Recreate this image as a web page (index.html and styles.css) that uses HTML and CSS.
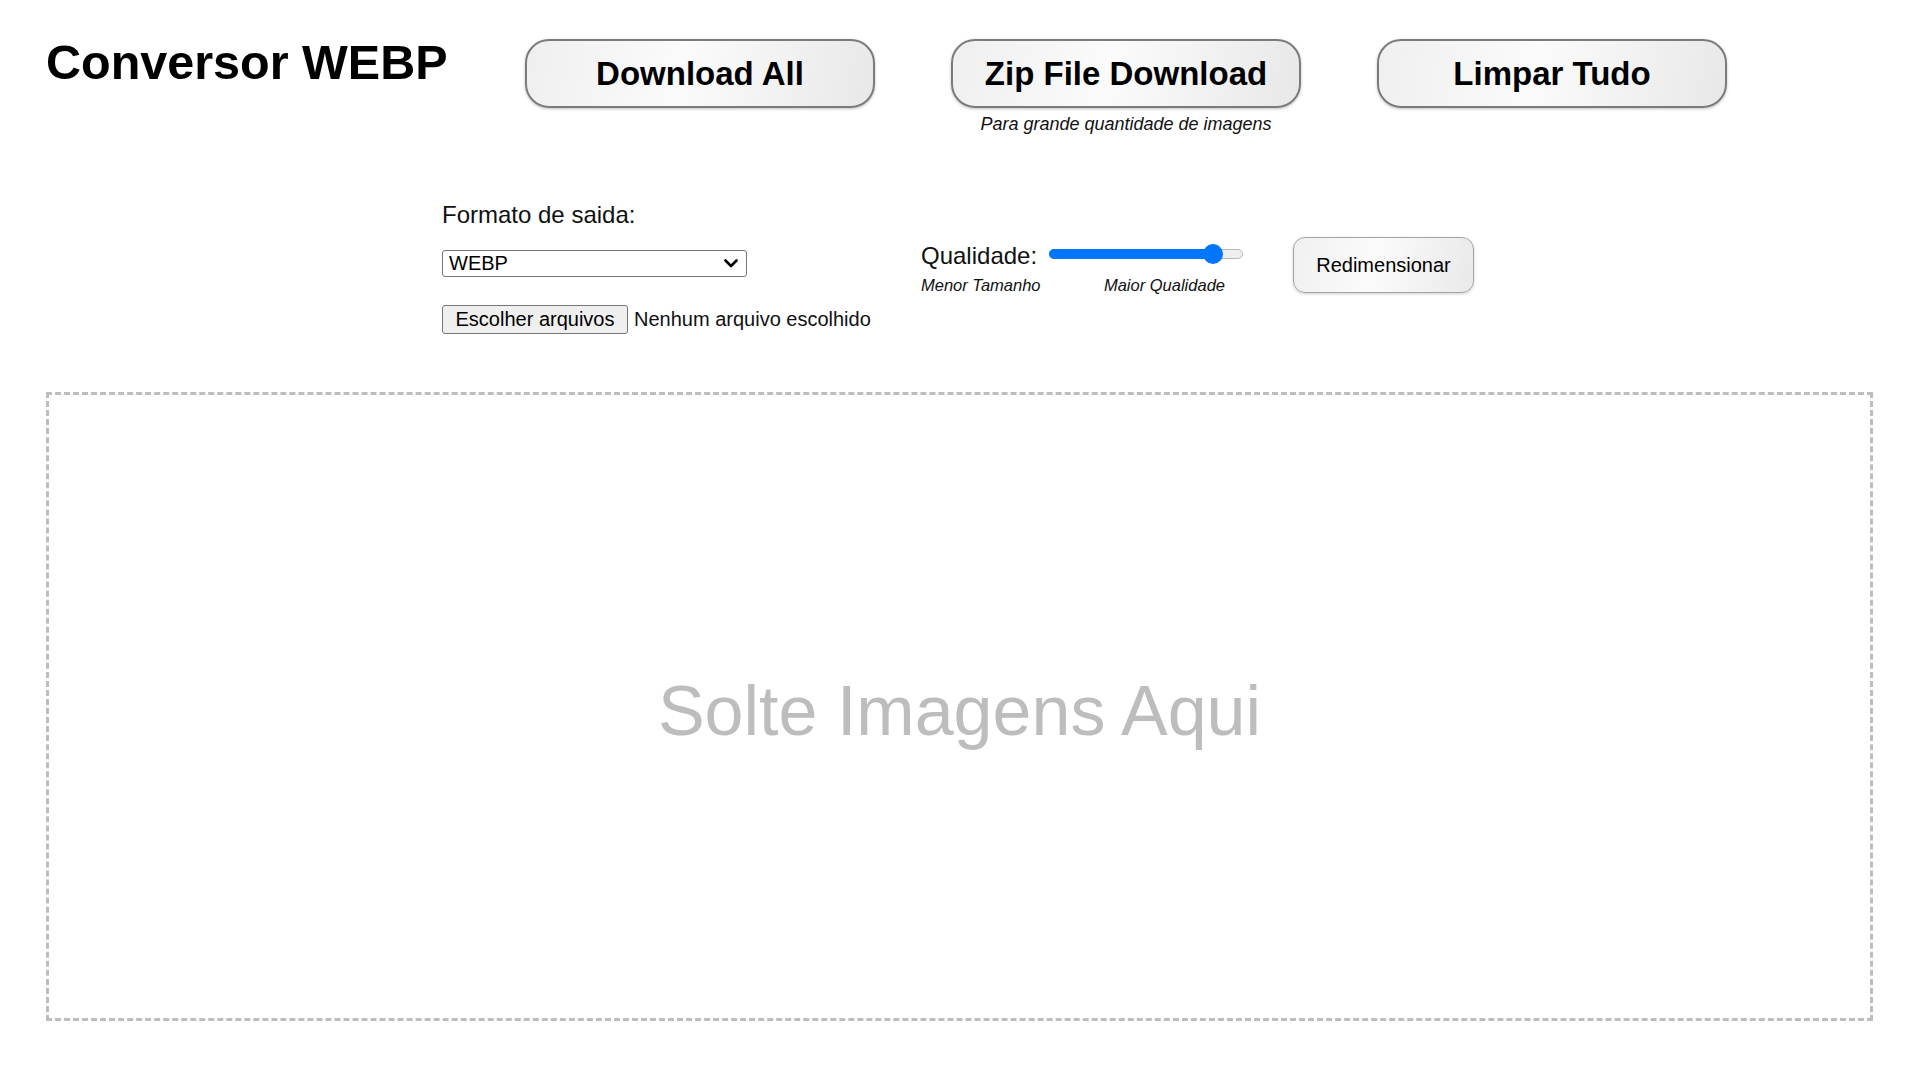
FILE: index.html
```html
<!DOCTYPE html>
<html lang="pt-BR">
<head>
<meta charset="utf-8">
<title>Conversor WEBP</title>
<link rel="stylesheet" href="styles.css">
</head>
<body>
<div class="page">
  <header class="header">
    <h1 class="title">Conversor WEBP</h1>
    <div class="actions">
      <button class="pill">Download All</button>
      <div class="zip-col">
        <button class="pill">Zip File Download</button>
        <div class="hint">Para grande quantidade de imagens</div>
      </div>
      <button class="pill">Limpar Tudo</button>
    </div>
  </header>

  <section class="controls">
    <div class="col-format">
      <label class="label">Formato de saida:</label>
      <div class="select-wrap">
        <select class="select"><option>WEBP</option><option>PNG</option><option>JPEG</option></select>
        <svg class="chevron" viewBox="0 0 14 9" width="14" height="9"><path d="M1.5 1.5 L7 7 L12.5 1.5" fill="none" stroke="#000" stroke-width="2.6" stroke-linecap="round" stroke-linejoin="round"/></svg>
      </div>
      <div class="file-row">
        <button class="file-btn">Escolher arquivos</button>
        <span class="file-name">Nenhum arquivo escolhido</span>
      </div>
    </div>

    <div class="col-quality">
      <div class="quality-row">
        <span class="label">Qualidade:</span>
        <div class="slider">
          <div class="slider-track"></div>
          <div class="slider-fill" style="width: 164px"></div>
          <div class="slider-thumb" style="left: 154px"></div>
        </div>
      </div>
      <div class="quality-hints">
        <span>Menor Tamanho</span>
        <span>Maior Qualidade</span>
      </div>
    </div>

    <button class="resize-btn">Redimensionar</button>
  </section>

  <section class="dropzone">
    <span class="drop-text">Solte Imagens Aqui</span>
  </section>
</div>
</body>
</html>
```

FILE: styles.css
```css
* { box-sizing: border-box; }

html, body {
  margin: 0;
  padding: 0;
  background: #ffffff;
}

body {
  font-family: "Liberation Sans", Arial, sans-serif;
  color: #000;
}

.page {
  padding: 0 47px 0 46px;
}

.header {
  display: flex;
  align-items: flex-start;
  gap: 76px;
  padding-top: 35px;
}

.title {
  flex: none;
  width: 403px;
  margin: 0;
  font-size: 48.5px;
  line-height: 55px;
  font-weight: bold;
  white-space: nowrap;
}

.actions {
  display: flex;
  align-items: flex-start;
  gap: 76px;
  margin-top: 4px;
}

.pill {
  width: 350px;
  height: 69px;
  border: 2px solid #7b7b7b;
  border-radius: 24px;
  background: linear-gradient(100deg, #efefef 0%, #fbfbfb 45%, #e8e8e8 100%);
  box-shadow: 0 1px 3px rgba(0, 0, 0, 0.25);
  font-family: "Liberation Sans", Arial, sans-serif;
  font-size: 33px;
  font-weight: bold;
  color: #000;
  padding: 0;
  cursor: pointer;
}

.zip-col {
  display: flex;
  flex-direction: column;
  align-items: center;
}

.hint {
  margin-top: 6px;
  font-size: 18px;
  line-height: 21px;
  font-style: italic;
  color: #111;
}

.controls {
  display: flex;
  align-items: flex-start;
  margin-top: 66px;
  padding-left: 396px;
}

.label {
  font-size: 24px;
  line-height: 28px;
  color: #111;
}

.col-format {
  display: flex;
  flex-direction: column;
  align-items: flex-start;
  width: 479px;
}

.select-wrap {
  position: relative;
  margin-top: 21px;
}

.select {
  appearance: none;
  -webkit-appearance: none;
  display: block;
  width: 305px;
  height: 27px;
  border: 1px solid #767676;
  border-radius: 3px;
  background: #fff;
  font-family: "Liberation Sans", Arial, sans-serif;
  font-size: 20px;
  line-height: 25px;
  padding: 0 0 0 6px;
  color: #000;
}

.chevron {
  position: absolute;
  right: 9px;
  top: 9px;
  pointer-events: none;
}

.file-row {
  display: flex;
  align-items: center;
  gap: 6px;
  margin-top: 28px;
}

.file-btn {
  height: 29px;
  width: 186px;
  padding: 0;
  border: 1px solid #767676;
  border-radius: 3px;
  background: #efefef;
  font-family: "Liberation Sans", Arial, sans-serif;
  font-size: 20px;
  color: #000;
}

.file-name {
  font-size: 20px;
  color: #111;
}

.col-quality {
  display: flex;
  flex-direction: column;
  margin-top: 41px;
  width: 372px;
}

.quality-row {
  display: flex;
  align-items: center;
  gap: 12px;
}

.slider {
  position: relative;
  width: 194px;
  height: 20px;
  margin-top: -5px;
}

.slider-track {
  position: absolute;
  left: 0;
  right: 0;
  top: 5px;
  height: 10px;
  border-radius: 5px;
  background: #efefef;
  border: 1px solid #b8b8b8;
}

.slider-fill {
  position: absolute;
  left: 0;
  top: 5px;
  height: 10px;
  border-radius: 5px;
  background: #0075ff;
}

.slider-thumb {
  position: absolute;
  top: 0;
  width: 20px;
  height: 20px;
  border-radius: 50%;
  background: #0075ff;
}

.quality-hints {
  display: flex;
  justify-content: space-between;
  width: 304px;
  margin-top: 6px;
  font-size: 16.5px;
  line-height: 19px;
  font-style: italic;
  color: #111;
}

.resize-btn {
  margin-top: 36px;
  width: 181px;
  height: 56px;
  border: 1px solid #a5a5a5;
  border-radius: 12px;
  background: linear-gradient(100deg, #f0f0f0 0%, #fbfbfb 45%, #e9e9e9 100%);
  box-shadow: 0 1px 3px rgba(0, 0, 0, 0.2);
  font-family: "Liberation Sans", Arial, sans-serif;
  font-size: 20px;
  color: #000;
  padding: 0;
}

.dropzone {
  margin-top: 58px;
  height: 629px;
  border: 3px dashed #bdbdbd;
  display: flex;
  align-items: center;
  justify-content: center;
}

.drop-text {
  font-size: 70px;
  color: #bdbdbd;
  margin-top: 8px;
}
```
